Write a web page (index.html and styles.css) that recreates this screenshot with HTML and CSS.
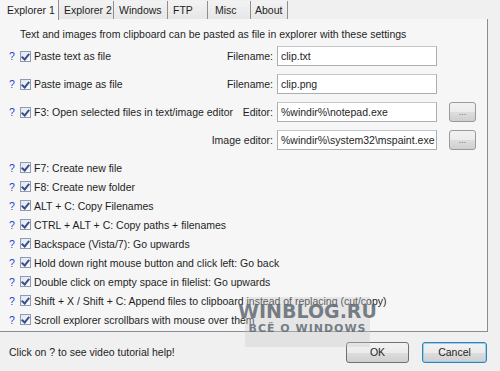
FILE: index.html
```html
<!DOCTYPE html>
<html lang="en">
<head>
    <meta charset="UTF-8">
    <title>Settings</title>
    <link rel="stylesheet" href="styles.css">
</head>
<body>
    <div class="dialog">
        <div class="tabs">
            <span class="tab active t1">Explorer 1</span>
            <span class="tab t2">Explorer 2</span>
            <span class="tab t3">Windows</span>
            <span class="tab t4">FTP</span>
            <span class="tab t5">Misc</span>
            <span class="tab t6">About</span>
        </div>

        <div class="panel">
            <p class="intro">Text and images from clipboard can be pasted as file in explorer with these settings</p>

            <div class="fields">
                <label class="option"><span class="help">?</span><span class="check"></span>Paste text as file</label>
                <span class="field-label">Filename:</span>
                <span class="input">clip.txt</span>
                <span></span>

                <label class="option"><span class="help">?</span><span class="check"></span>Paste image as file</label>
                <span class="field-label">Filename:</span>
                <span class="input">clip.png</span>
                <span></span>

                <label class="option"><span class="help">?</span><span class="check"></span>F3: Open selected files in text/image editor</label>
                <span class="field-label">Editor:</span>
                <span class="input">%windir%\notepad.exe</span>
                <span class="btn small">...</span>

                <span></span>
                <span class="field-label">Image editor:</span>
                <span class="input">%windir%\system32\mspaint.exe</span>
                <span class="btn small">...</span>
            </div>

            <ul class="options">
                <li class="option"><span class="help">?</span><span class="check"></span>F7: Create new file</li>
                <li class="option"><span class="help">?</span><span class="check"></span>F8: Create new folder</li>
                <li class="option"><span class="help">?</span><span class="check"></span>ALT + C: Copy Filenames</li>
                <li class="option"><span class="help">?</span><span class="check"></span>CTRL + ALT + C: Copy paths + filenames</li>
                <li class="option"><span class="help">?</span><span class="check"></span>Backspace (Vista/7): Go upwards</li>
                <li class="option"><span class="help">?</span><span class="check"></span>Hold down right mouse button and click left: Go back</li>
                <li class="option"><span class="help">?</span><span class="check"></span>Double click on empty space in filelist: Go upwards</li>
                <li class="option"><span class="help">?</span><span class="check"></span>Shift + X / Shift + C: Append files to clipboard instead of replacing (cut/copy)</li>
                <li class="option"><span class="help">?</span><span class="check"></span>Scroll explorer scrollbars with mouse over them</li>
            </ul>
        </div>

        <div class="footer">
            <span class="hint">Click on ? to see video tutorial help!</span>
            <span class="btn">OK</span>
            <span class="btn default">Cancel</span>
        </div>

        <div class="watermark">
            <span class="wm-big">WINBLOG.RU</span>
            <span class="wm-small">ВСЁ О WINDOWS</span>
        </div>
    </div>
</body>
</html>
```

FILE: styles.css
```css
body {
    margin: 0;
    background: #f0f0f0;
    font-family: "Liberation Sans", Arial, sans-serif;
    font-size: 10.5px;
    color: #1e1e1e;
}
.dialog {
    position: relative;
    width: 500px;
    height: 371px;
    overflow: hidden;
}
.tabs {
    display: flex;
    height: 19px;
}
.tab {
    display: flex;
    align-items: center;
    box-sizing: border-box;
    padding-left: 5px;
    border-right: 1px solid #8e8f8f;
    background: linear-gradient(#f3f3f3, #e6e6e6);
    height: 18px;
    margin-top: 1px;
    white-space: nowrap;
}
.tab.active {
    background: #f6f6f6;
    height: 20px;
    margin-top: 0;
    padding-left: 7px;
    z-index: 1;
}
.t1 { width: 59px; }
.t2 { width: 55px; }
.t3 { width: 54px; }
.t4 { width: 40px; }
.t5 { width: 43px; padding-left: 7px; }
.t6 { width: 37px; padding-left: 4px; }
.panel {
    width: 488px;
    height: 313px;
    box-sizing: border-box;
    border-right: 1px solid #898c95;
    border-bottom: 1px solid #898c95;
    background: #f6f6f6;
    padding: 8px 11px 0 9px;
}
.intro {
    margin: 0 0 0 11px;
    height: 15px;
    line-height: 15px;
}
.fields {
    display: grid;
    grid-template-columns: minmax(0, 1fr) 94px 160px 39px;
    grid-auto-rows: 28px;
    align-items: center;
}
.field-label {
    text-align: right;
    padding-right: 4px;
    white-space: nowrap;
}
.input {
    box-sizing: border-box;
    height: 20px;
    border: 1px solid #abadb3;
    border-top-color: #c4c6cc;
    background: #fff;
    padding: 0 3px;
    line-height: 18px;
    white-space: nowrap;
    overflow: hidden;
}
.option {
    display: flex;
    align-items: center;
    white-space: nowrap;
}
.help {
    flex-shrink: 0;
    color: #2a3fd0;
    width: 11px;
}
.check {
    flex-shrink: 0;
    box-sizing: border-box;
    width: 11px;
    height: 11px;
    margin-right: 3px;
    border: 1px solid #8e9bb0;
    background: linear-gradient(135deg, #dde6f2, #fdfdfd);
    position: relative;
}
.check::after {
    content: "";
    position: absolute;
    left: 2px;
    top: 0;
    width: 3px;
    height: 6px;
    border: solid #3d4f87;
    border-width: 0 2px 2px 0;
    transform: rotate(40deg);
}
.options {
    list-style: none;
    margin: 4px 0 0;
    padding: 0;
}
.options .option {
    height: 19px;
}
.btn {
    box-sizing: border-box;
    display: flex;
    align-items: center;
    justify-content: center;
    height: 21px;
    width: 63px;
    border: 1px solid #707070;
    border-radius: 3px;
    background: linear-gradient(#f2f2f2 0%, #ebebeb 50%, #dddddd 51%, #cfcfcf 100%);
}
.btn.small {
    width: 27px;
    height: 20px;
    margin-left: 12px;
    color: #6d6d6d;
    font-size: 9px;
    border-color: #9a9a9a;
}
.btn.default {
    width: 65px;
    border-color: #3c7fb1;
    box-shadow: inset 0 0 0 1px #93d1f1;
}
.footer {
    display: flex;
    align-items: center;
    height: 40px;
    padding: 0 13px 0 9px;
    gap: 13px;
}
.hint {
    flex: 1;
}
.watermark {
    position: absolute;
    left: 245px;
    top: 297px;
    width: 125px;
    height: 50px;
    background: rgba(200, 200, 200, 0.35);
    display: flex;
    flex-direction: column;
    align-items: center;
    color: rgba(95, 105, 115, 0.85);
    font-family: "DejaVu Sans", sans-serif;
    font-weight: bold;
}
.wm-big {
    font-size: 19px;
    line-height: 22px;
    margin-top: 3px;
}
.wm-small {
    font-size: 11px;
    letter-spacing: 1px;
    line-height: 14px;
}
```
